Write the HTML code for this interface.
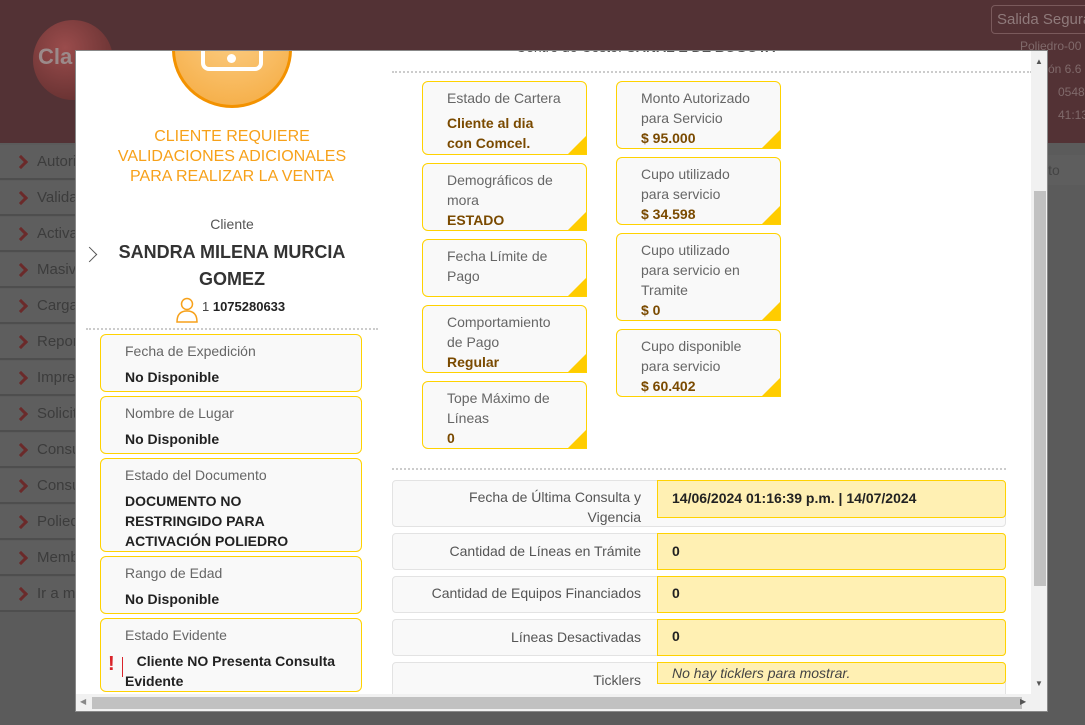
<!DOCTYPE html>
<html><head><meta charset="utf-8"><style>
*{box-sizing:border-box;margin:0;padding:0}
body{width:1085px;height:725px;overflow:hidden;background:#5b5b5b;font-family:"Liberation Sans",sans-serif;position:relative}
.hdr{position:absolute;left:0;top:0;width:1085px;height:143px;background:#533235}
.side{position:absolute;left:0;width:80px;height:35px;background:#5e5e5e;border-bottom:2px solid #4e4e4e;color:#3c3c3c;font-size:15px;line-height:34px;padding-left:37px}
.side:before{content:"";position:absolute;left:16px;top:12px;width:7px;height:7px;border-top:3px solid #6b2a2a;border-right:3px solid #6b2a2a;transform:rotate(45deg)}
.modal{position:absolute;left:75px;top:50px;width:973px;height:662px;background:#fff;border:1px solid #888;overflow:hidden}
.a{position:absolute}
.lc{position:absolute;left:24px;width:262px;border:1px solid #ffd200;border-radius:6px;background:#f9f9f9;padding-left:24px;font-size:14px}
.lc .t{color:#666;margin-top:8px;line-height:16px}
.lc .v{color:#222;font-weight:bold;margin-top:8px;line-height:20px}
.rc{position:absolute;width:165px;border:1px solid #ffd200;border-radius:6px 6px 0 6px;background:#f9f9f9;padding-left:24px;padding-top:6px;font-size:14px;line-height:20px;overflow:hidden}
.rc .t{color:#666}
.rc .v{color:#7a4a00;font-weight:bold}
.rc:after{content:"";position:absolute;right:0;bottom:0;width:18px;height:18px;background:#ffcc00;clip-path:polygon(100% 0,100% 100%,0 100%)}
.rc:before{content:"";position:absolute;right:-6px;bottom:-16px;width:4px;height:50px;background:#fff;border-left:1px solid #dde6ea;transform:rotate(45deg)}
.row{position:absolute;left:316px;width:614px;border:1px solid #e3e3e3;border-radius:4px;background:#f9f9f9;font-size:14px}
.row .l{position:absolute;right:364px;color:#555;text-align:right;line-height:20px}
.row .y{position:absolute;left:264px;right:-1px;top:-1px;background:#fff0b3;border:1px solid #ffd200;border-radius:0 4px 4px 0;padding-left:14px;font-weight:bold;color:#222;line-height:20px}
.dot{position:absolute;height:0;border-top:2px dotted #ccc}
</style></head><body>
<div class="hdr">
<div class="a" style="left:33px;top:20px;width:80px;height:80px;border-radius:50%;background:radial-gradient(circle at 40% 35%,#9a4c4c,#5a2b2b);"></div>
<div class="a" style="left:38px;top:44px;color:#9b8a8a;font-size:22px;font-weight:bold">Cla</div>
<div class="a" style="left:991px;top:5px;width:110px;height:29px;border:1px solid #7a5a5c;border-radius:4px;color:#8f7a7b;font-size:15px;line-height:27px;padding-left:5px;white-space:nowrap">Salida Segura</div>
<div class="a" style="left:1020px;top:39px;color:#806a6b;font-size:12px;white-space:nowrap">Poliedro-00</div>
<div class="a" style="left:1048px;top:62px;color:#806a6b;font-size:12px">ón 6.6</div>
<div class="a" style="left:1058px;top:85px;color:#806a6b;font-size:12px">05483</div>
<div class="a" style="left:1058px;top:108px;color:#806a6b;font-size:12px">41:13</div>
</div>
<div class="side" style="top:145px">Autori</div>
<div class="side" style="top:181px">Valida</div>
<div class="side" style="top:217px">Activa</div>
<div class="side" style="top:253px">Masiv</div>
<div class="side" style="top:289px">Carga</div>
<div class="side" style="top:325px">Repor</div>
<div class="side" style="top:361px">Impre</div>
<div class="side" style="top:397px">Solicit</div>
<div class="side" style="top:433px">Consu</div>
<div class="side" style="top:469px">Consu</div>
<div class="side" style="top:505px">Polied</div>
<div class="side" style="top:541px">Memb</div>
<div class="side" style="top:577px">Ir a m</div>
<div class="a" style="left:1045px;top:155px;width:40px;height:30px;color:#444;font-size:14px;line-height:30px;background:#5e5e5e">ito</div>

<div class="modal">
<div class="a" style="left:96px;top:-60px;width:120px;height:117px;border-radius:50%;background:radial-gradient(circle at 50% 30%,#fbd08a,#f5a93d);border:3px solid #f39200"></div>
<div class="a" style="left:125px;top:-20px;width:62px;height:40px;border:4px solid #fff;border-top:none;border-radius:0 0 8px 8px"></div>
<div class="a" style="left:151px;top:3px;width:9px;height:9px;border-radius:50%;background:#fff"></div>
<div class="a" style="left:0;top:76px;width:312px;text-align:center;color:#f7a11a;font-size:16px;line-height:20px">CLIENTE REQUIERE<br>VALIDACIONES ADICIONALES<br>PARA REALIZAR LA VENTA</div>
<div class="a" style="left:0;top:165px;width:312px;text-align:center;color:#555;font-size:14px">Cliente</div>
<div class="a" style="left:8px;top:198px;width:11px;height:11px;border-top:1px solid #555;border-right:1px solid #555;transform:rotate(45deg)"></div>
<div class="a" style="left:0;top:188px;width:312px;text-align:center;color:#333;font-size:18px;font-weight:bold;line-height:27px">SANDRA MILENA MURCIA<br>GOMEZ</div>
<svg class="a" style="left:100px;top:246px" width="22" height="26" viewBox="0 0 22 26"><circle cx="11" cy="7" r="5.5" fill="none" stroke="#f7a11a" stroke-width="1.5"/><path d="M1 25 Q1 14 11 14 Q21 14 21 25 Z" fill="none" stroke="#f7a11a" stroke-width="1.5"/></svg>
<div class="a" style="left:126px;top:248px;color:#444;font-size:13px">1 <b style="color:#222">1075280633</b></div>
<div class="dot" style="left:10px;top:277px;width:292px"></div>
<div class="lc" style="top:283px;height:58px"><div class="t">Fecha de Expedición</div><div class="v">No Disponible</div></div>
<div class="lc" style="top:345px;height:58px"><div class="t">Nombre de Lugar</div><div class="v">No Disponible</div></div>
<div class="lc" style="top:407px;height:94px"><div class="t">Estado del Documento</div><div class="v">DOCUMENTO NO<br>RESTRINGIDO PARA<br>ACTIVACIÓN POLIEDRO</div></div>
<div class="lc" style="top:505px;height:58px"><div class="t">Rango de Edad</div><div class="v">No Disponible</div></div>
<div class="lc" style="top:567px;height:74px"><div class="t">Estado Evidente</div><div class="v">&nbsp;&nbsp;&nbsp;Cliente NO Presenta Consulta<br>Evidente</div></div>
<div class="a" style="left:32px;top:602px;color:#d9242a;font-weight:bold;font-size:20px">!</div>
<div class="a" style="left:46px;top:606px;width:1px;height:20px;background:#d9242a"></div>

<div class="a" style="left:440px;top:-12px;color:#555;font-size:14px">Centro de Costo: <b>CANAL E DE BOGOTA</b></div>
<div class="dot" style="left:316px;top:20px;width:640px"></div>
<div class="rc" style="left:346px;top:30px;height:74px"><div class="t">Estado de Cartera</div><div class="v" style="margin-top:5px">Cliente al dia<br>con Comcel.</div></div>
<div class="rc" style="left:346px;top:112px;height:68px"><div class="t">Demográficos de<br>mora</div><div class="v">ESTADO</div></div>
<div class="rc" style="left:346px;top:188px;height:58px"><div class="t">Fecha Límite de<br>Pago</div></div>
<div class="rc" style="left:346px;top:254px;height:68px"><div class="t">Comportamiento<br>de Pago</div><div class="v">Regular</div></div>
<div class="rc" style="left:346px;top:330px;height:68px"><div class="t">Tope Máximo de<br>Líneas</div><div class="v">0</div></div>
<div class="rc" style="left:540px;top:30px;height:68px"><div class="t">Monto Autorizado<br>para Servicio</div><div class="v">$ 95.000</div></div>
<div class="rc" style="left:540px;top:106px;height:68px"><div class="t">Cupo utilizado<br>para servicio</div><div class="v">$ 34.598</div></div>
<div class="rc" style="left:540px;top:182px;height:88px"><div class="t">Cupo utilizado<br>para servicio en<br>Tramite</div><div class="v">$ 0</div></div>
<div class="rc" style="left:540px;top:278px;height:68px"><div class="t">Cupo disponible<br>para servicio</div><div class="v">$ 60.402</div></div>
<div class="dot" style="left:316px;top:417px;width:614px"></div>
<div class="row" style="top:429px;height:47px"><div class="l" style="top:6px">Fecha de Última Consulta y<br>Vigencia</div><div class="y" style="height:38px;padding-top:7px">14/06/2024 01:16:39 p.m. | 14/07/2024</div></div>
<div class="row" style="top:482px;height:37px"><div class="l" style="top:7px">Cantidad de Líneas en Trámite</div><div class="y" style="height:37px;padding-top:7px">0</div></div>
<div class="row" style="top:525px;height:37px"><div class="l" style="top:6px">Cantidad de Equipos Financiados</div><div class="y" style="height:37px;padding-top:6px">0</div></div>
<div class="row" style="top:568px;height:37px"><div class="l" style="top:7px">Líneas Desactivadas</div><div class="y" style="height:37px;padding-top:6px">0</div></div>
<div class="row" style="top:611px;height:50px"><div class="l" style="top:7px">Ticklers</div><div class="y" style="height:22px;padding-top:0;font-weight:normal;font-style:italic;color:#444">No hay ticklers para mostrar.</div></div>

<div class="a" style="left:955px;top:0;width:17px;height:643px;background:#f1f1f1"></div>
<div class="a" style="left:958px;top:140px;width:12px;height:395px;background:#c1c1c1"></div>
<div class="a" style="left:959px;top:6px;color:#555;font-size:8px">▲</div>
<div class="a" style="left:959px;top:628px;color:#555;font-size:8px">▼</div>
<div class="a" style="left:0;top:643px;width:972px;height:18px;background:#f1f1f1"></div>
<div class="a" style="left:16px;top:646px;width:930px;height:12px;background:#c1c1c1"></div>
<div class="a" style="left:4px;top:646px;color:#888;font-size:8px">◀</div>
<div class="a" style="left:944px;top:646px;color:#555;font-size:8px">▶</div>
</div>
</body></html>
